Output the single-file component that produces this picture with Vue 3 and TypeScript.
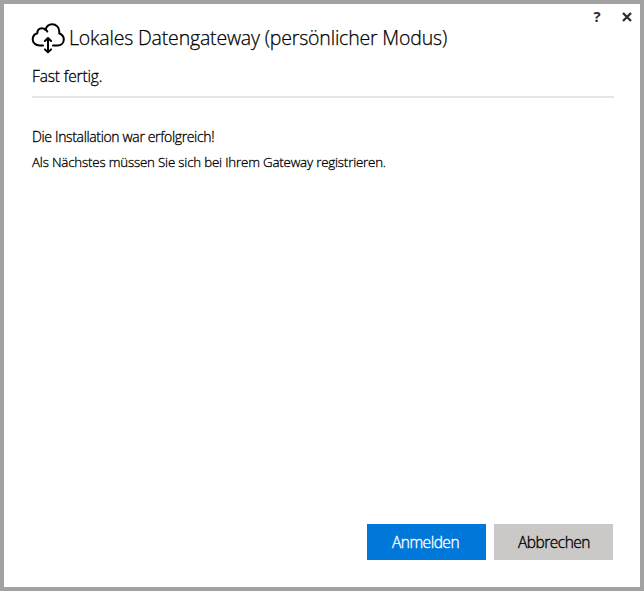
<script setup lang="ts">
interface DialogAction {
  label: string
  kind: 'primary' | 'secondary'
}

const title = 'Lokales Datengateway (persönlicher Modus)'
const status = 'Fast fertig.'
const actions: DialogAction[] = [
  { label: 'Anmelden', kind: 'primary' },
  { label: 'Abbrechen', kind: 'secondary' },
]
</script>

<template>
  <main class="dialog">
    <div class="window-controls">
      <button class="control help" type="button">?</button>
      <button class="control" type="button" aria-label="Schließen">
        <svg width="10" height="10" viewBox="0 0 10 10">
          <path d="M1 1L9 9M9 1L1 9" fill="none" stroke="#2b2b33" stroke-width="2.3" />
        </svg>
      </button>
    </div>
    <header class="header">
      <div class="title-row">
        <svg class="cloud" width="34" height="32" viewBox="0 0 34 32">
          <g fill="none" stroke="#000" stroke-width="2" stroke-linecap="round" stroke-linejoin="round">
            <path d="M12 22.5H8.7C4.7 22.5 1.7 19.9 1.7 16.4C1.7 13.3 3.7 11 6.3 10.2C6.1 7.1 8.3 5.3 11 5.3C12.4 5.3 13.5 5.8 14.4 6.7C15.5 3.3 17.9 1.2 21.1 1.2C25.3 1.2 28.3 4.5 28.3 8.5V10.5C31.2 11.5 32.8 13.7 32.8 16.5C32.8 20 30.2 22.5 26.5 22.5H22" />
            <path d="M14.4 6.7C15.3 7.1 16 7.8 16.3 8.5" />
            <path d="M17 15.4V29.2M13.9 18L17 15L20.1 18M13.9 26.4L17 29.4L20.1 26.4" />
          </g>
        </svg>
        <h1 class="title">{{ title }}</h1>
      </div>
      <p class="status">{{ status }}</p>
    </header>
    <section class="content">
      <p class="line success">Die Installation war erfolgreich!</p>
      <p class="line next">Als Nächstes müssen Sie sich bei Ihrem Gateway registrieren.</p>
    </section>
    <footer class="footer">
      <button v-for="action in actions" :key="action.label" type="button" class="action" :class="action.kind">
        <span>{{ action.label }}</span>
      </button>
    </footer>
  </main>
</template>

<style>
body {
  margin: 0;
}
</style>

<style scoped>
.dialog {
  box-sizing: border-box;
  width: 644px;
  height: 591px;
  display: flex;
  flex-direction: column;
  border: 4px solid #a3a2a2;
  background: #fff;
  color: #000;
  font-family: "Segoe UI", "Open Sans", "Noto Sans", sans-serif;
  white-space: nowrap;
}
.window-controls {
  display: flex;
  justify-content: flex-end;
  gap: 18px;
  height: 18px;
  padding: 4px 7px 0 0;
  box-sizing: border-box;
}
.control {
  display: flex;
  align-items: center;
  justify-content: center;
  width: 12px;
  height: 18px;
  padding: 0;
  border: 0;
  background: none;
  color: #2b2b33;
  font: 700 15px/18px "Open Sans", sans-serif;
}
.help {
  height: 16px;
}
.header {
  margin: 0 26px 0 28px;
  height: 74px;
  border-bottom: 2px solid #e6e6e6;
}
.title-row {
  display: flex;
  gap: 4px;
  height: 32px;
  margin-left: -1px;
}
.cloud {
  margin-top: 1px;
}
.title {
  margin: 0;
  font-size: 19.5px;
  font-weight: 300;
  letter-spacing: -0.18px;
  line-height: 32px;
  -webkit-text-stroke: 0.25px currentColor;
}
.status {
  margin: 11px 0 0;
  font-size: 15.5px;
  font-weight: 300;
  letter-spacing: -0.15px;
  line-height: 22px;
  -webkit-text-stroke: 0.3px currentColor;
}
.content {
  flex: 1;
  padding: 26px 28px 0;
}
.line {
  margin: 0;
  font-size: 14px;
  font-weight: 300;
  letter-spacing: -0.35px;
  line-height: 26px;
  -webkit-text-stroke: 0.3px currentColor;
}
.next {
  font-size: 13.3px;
  letter-spacing: -0.18px;
  line-height: 25px;
}
.footer {
  display: flex;
  justify-content: flex-end;
  gap: 8px;
  padding: 0 27px 27px 0;
}
.action {
  width: 119px;
  height: 36px;
  padding: 0;
  border: 0;
  font: 300 15.5px/36px "Open Sans", sans-serif;
  letter-spacing: -0.5px;
  -webkit-text-stroke: 0.35px currentColor;
}
.primary {
  padding-right: 2px;
  background: #0078d9;
  color: #fff;
}
.secondary {
  padding-left: 1px;
  background: #cac9c8;
  color: #000;
}
</style>
